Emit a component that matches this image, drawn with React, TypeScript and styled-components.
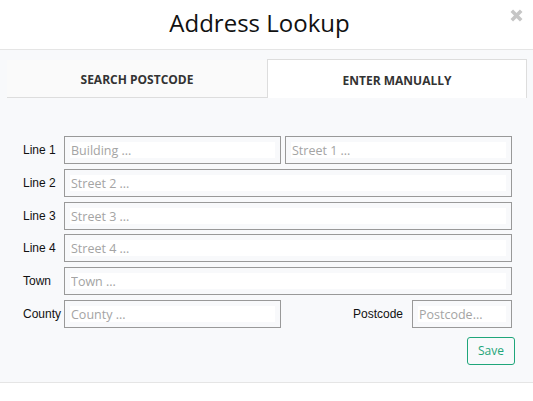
import React from "react";
import styled, { createGlobalStyle } from "styled-components";

const GlobalStyle = createGlobalStyle`
  html, body { margin: 0; padding: 0; background: #ffffff; }
  * { box-sizing: border-box; }
`;

const Modal = styled.div`
  width: 533px;
  background: #ffffff;
  font-family: "Open Sans", "Liberation Sans", sans-serif;
`;

const Header = styled.div`
  position: relative;
  height: 50px;
  padding-right: 14px;
  border-bottom: 1px solid #e5e5e5;
  text-align: center;
`;

const Title = styled.h1`
  margin: 0;
  font-family: "Open Sans", sans-serif;
  font-size: 24px;
  font-weight: 500;
  line-height: 45px;
  color: #111111;
`;

const CloseButton = styled.button`
  position: absolute;
  top: 8px;
  right: 10px;
  width: 14px;
  height: 14px;
  padding: 0;
  border: none;
  background: transparent;
  display: flex;
  align-items: center;
  justify-content: center;
  cursor: pointer;
`;

const Body = styled.div`
  background: #f8f9fb;
  padding: 9px 6px 17px 7px;
  border-bottom: 1px solid #e5e5e5;
`;

const Tabs = styled.div`
  display: grid;
  grid-template-columns: 260px 260px;
  height: 39px;
`;

const Tab = styled.div<{ $active?: boolean }>`
  display: flex;
  align-items: center;
  justify-content: center;
  padding-top: 2px;
  font-family: "Open Sans", sans-serif;
  font-size: 12px;
  font-weight: 700;
  color: #333333;
  text-transform: uppercase;
  background: ${(p) => (p.$active ? "#ffffff" : "#fafafa")};
  border: ${(p) => (p.$active ? "1px solid #dddddd" : "none")};
  border-bottom: ${(p) => (p.$active ? "none" : "1px solid #dddddd")};
  margin-top: ${(p) => (p.$active ? "0" : "1px")};
`;

const Form = styled.div`
  padding: 38px 15px 0 16px;
`;

const Row = styled.div`
  display: flex;
  align-items: center;
  height: 28px;
  margin-bottom: 4.8px;
`;

const Label = styled.label<{ $inline?: boolean }>`
  width: ${(p) => (p.$inline ? "auto" : "41px")};
  margin-right: ${(p) => (p.$inline ? "9px" : "0")};
  flex-shrink: 0;
  font-family: "Liberation Sans", Arial, sans-serif;
  font-size: 12px;
  color: #111111;
`;

const Input = styled.input<{ $width?: number; $gap?: number }>`
  height: 28px;
  ${(p) => (p.$width ? `width: ${p.$width}px; flex: none;` : "flex: 1; min-width: 0;")}
  margin-left: ${(p) => p.$gap ?? 0}px;
  padding: 1px 6px 0;
  border: 1px solid #999999;
  border-radius: 0;
  background: #ffffff;
  box-shadow: inset 0 0 0 5px #f8f9fb;
  font-family: "Open Sans", sans-serif;
  font-size: 12.5px;
  color: #333333;
  outline: none;
  &::placeholder {
    color: #a4a4a4;
  }
`;

const PostcodeGroup = styled.div`
  margin-left: auto;
  display: flex;
  align-items: center;
`;

const Actions = styled.div`
  display: flex;
  justify-content: flex-end;
  margin-top: 9px;
  margin-right: -3px;
`;

const SaveButton = styled.button`
  width: 48px;
  height: 28px;
  padding: 0;
  border: 1px solid #1fa67a;
  border-radius: 3px;
  background: transparent;
  color: #1fa67a;
  font-family: "Open Sans", sans-serif;
  font-size: 12px;
  cursor: pointer;
`;

const Footer = styled.div`
  height: 18px;
  background: #ffffff;
`;

export default function App() {
  return (
    <>
      <GlobalStyle />
      <Modal>
        <Header>
          <Title>Address Lookup</Title>
          <CloseButton aria-label="Close">
            <svg width="13" height="13" viewBox="0 0 13 13">
              <path d="M1.8 1.8 L11.2 11.2 M11.2 1.8 L1.8 11.2" stroke="#c6c6c6" strokeWidth="3.6" />
            </svg>
          </CloseButton>
        </Header>
        <Body>
          <Tabs>
            <Tab>Search Postcode</Tab>
            <Tab $active>Enter Manually</Tab>
          </Tabs>
          <Form>
            <Row>
              <Label>Line 1</Label>
              <Input $width={217} placeholder="Building ..." />
              <Input $gap={4} placeholder="Street 1 ..." />
            </Row>
            <Row>
              <Label>Line 2</Label>
              <Input placeholder="Street 2 ..." />
            </Row>
            <Row>
              <Label>Line 3</Label>
              <Input placeholder="Street 3 ..." />
            </Row>
            <Row>
              <Label>Line 4</Label>
              <Input placeholder="Street 4 ..." />
            </Row>
            <Row>
              <Label>Town</Label>
              <Input placeholder="Town ..." />
            </Row>
            <Row>
              <Label>County</Label>
              <Input $width={217} placeholder="County ..." />
              <PostcodeGroup>
                <Label $inline>Postcode</Label>
                <Input $width={100} placeholder="Postcode..." />
              </PostcodeGroup>
            </Row>
            <Actions>
              <SaveButton>Save</SaveButton>
            </Actions>
          </Form>
        </Body>
        <Footer />
      </Modal>
    </>
  );
}
